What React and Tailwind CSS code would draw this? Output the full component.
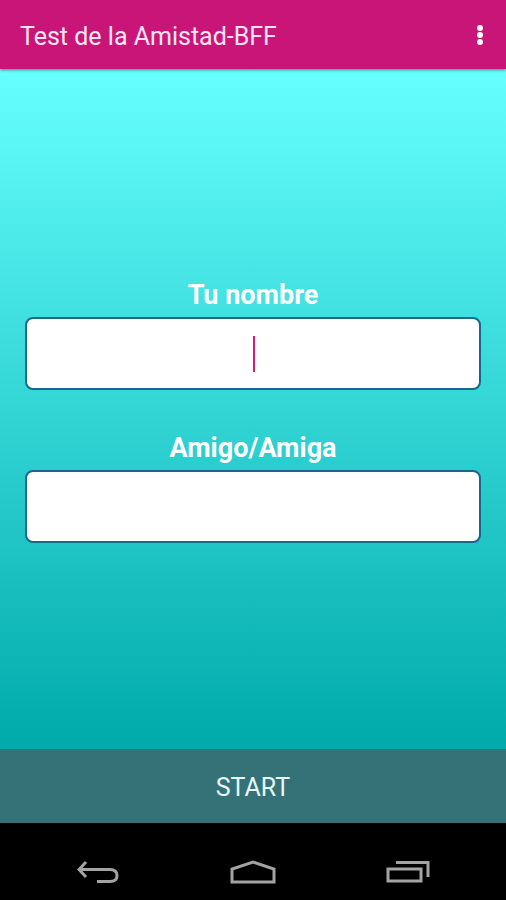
function Field({ id, label, caret }) {
  return (
    <div className="flex flex-col gap-1">
      <label htmlFor={id} className="text-center text-[27px] leading-9 font-bold text-white">
        {label}
      </label>
      <div className="relative">
        <input
          id={id}
          type="text"
          className="block h-[73px] w-full rounded-lg border-2 border-[#16688c] bg-white px-4 text-center text-[27px] text-black caret-[#d81b72] outline-none"
        />
        {caret && (
          <span
            aria-hidden="true"
            className="pointer-events-none absolute top-1/2 left-1/2 h-9 w-[2px] -translate-y-1/2 bg-[#d81b72]"
          />
        )}
      </div>
    </div>
  );
}

export default function App() {
  return (
    <div className="flex min-h-screen flex-col bg-black font-[Roboto,sans-serif]">
      <header className="z-10 flex h-[69px] items-center justify-between bg-[#c91478] px-5 shadow-[0_1px_3px_rgba(0,0,0,0.45)]">
        <h1 className="pt-1 text-[25px] leading-8 text-[#ffe6f4]">Test de la Amistad-BFF</h1>
        <button type="button" aria-label="Más opciones" className="flex w-3 flex-col items-center gap-px">
          <span className="size-[6px] rounded-full bg-white" />
          <span className="size-[6px] rounded-full bg-white" />
          <span className="size-[6px] rounded-full bg-white" />
        </button>
      </header>

      <main className="flex flex-1 flex-col justify-center gap-10 bg-linear-to-b/srgb from-[#66ffff] to-[#00aaaa] px-[25px] pt-[2px]">
        <Field id="nombre" label="Tu nombre" caret />
        <Field id="amigo" label="Amigo/Amiga" />
      </main>

      <button type="button" className="h-[74px] bg-[#357278] pt-1 text-[25px] leading-8 text-[#e6fafa]">
        START
      </button>

      <nav className="grid h-[77px] grid-cols-3 items-center justify-items-center bg-black px-5 pt-5">
        <button type="button" aria-label="Atrás">
          <svg width="42" height="24" viewBox="0 0 42 24" fill="none" stroke="#a3a3a3" strokeWidth="3">
            <path d="M9 2 L2 9.500 L9 17" />
            <path d="M2 9.500 H33 Q40 9.500 40 15.500 Q40 21.500 33 21.500 H20" />
          </svg>
        </button>
        <button type="button" aria-label="Inicio">
          <svg width="46" height="24" viewBox="0 0 46 24" fill="none" stroke="#a3a3a3" strokeWidth="3">
            <path d="M2 22 V9 L23 2 L44 9 V22 Z" />
          </svg>
        </button>
        <button type="button" aria-label="Recientes">
          <svg width="44" height="24" viewBox="0 0 44 24" fill="none" stroke="#a3a3a3" strokeWidth="3">
            <path d="M2 9 H35 V21 H2 Z" />
            <path d="M10 2.500 H42 V17" />
          </svg>
        </button>
      </nav>
    </div>
  );
}
